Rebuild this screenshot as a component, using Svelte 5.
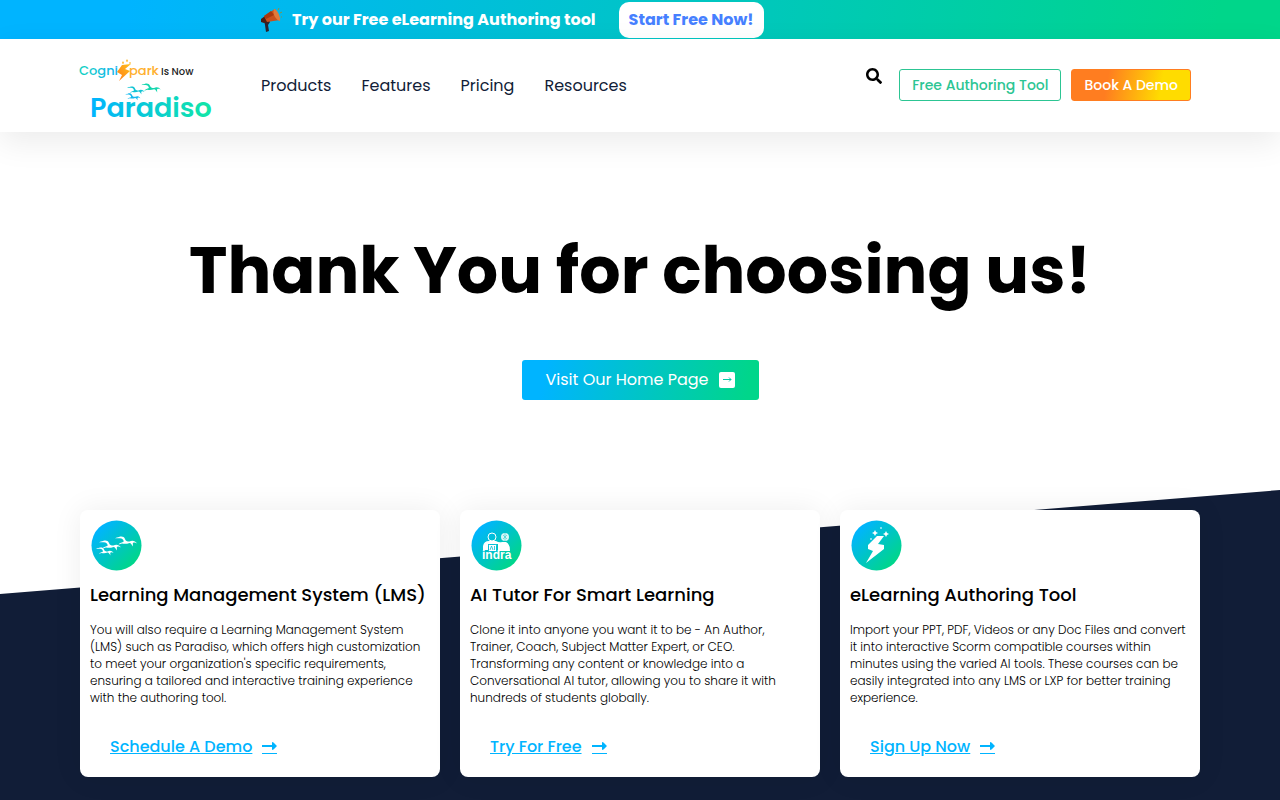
<script>
  const links = ["Products", "Features", "Pricing", "Resources"];

  const cards = [
    {
      icon: "birds",
      title: "Learning Management System (LMS)",
      text: "You will also require a Learning Management System\n(LMS) such as Paradiso, which offers high customization\nto meet your organization's specific requirements,\nensuring a tailored and interactive training experience\nwith the authoring tool.",
      action: "Schedule A Demo"
    },
    {
      icon: "indra",
      title: "AI Tutor For Smart Learning",
      text: "Clone it into anyone you want it to be - An Author,\nTrainer, Coach, Subject Matter Expert, or CEO.\nTransforming any content or knowledge into a\nConversational AI tutor, allowing you to share it with\nhundreds of students globally.",
      action: "Try For Free"
    },
    {
      icon: "spark",
      title: "eLearning Authoring Tool",
      text: "Import your PPT, PDF, Videos or any Doc Files and convert\nit into interactive Scorm compatible courses within\nminutes using the varied AI tools. These courses can be\neasily integrated into any LMS or LXP for better training\nexperience.",
      action: "Sign Up Now"
    }
  ];
</script>

<!-- one flying bird, about 22x10 -->
{#snippet bird(x, y, s)}
  <path
    transform="translate({x} {y}) scale({s})"
    d="M0 2.500C1.500 1 2.500 1.500 4 1C6.500 0 9 .5 10 3C10.500 5 12 5.500 14.500 5.500C17 4 20 4.300 22 7.500C20 6 18 6.200 17.800 7.500L18 10.500C16.800 9 16 7 14.500 7C12 8 9 8 7 7.500L3.500 8.500C5 6.800 7 6.600 8.800 5.600C8.500 3.500 7 2 4.500 2.200C3 2.500 1.500 2 0 2.500Z"
  />
{/snippet}

<div class="page">
  <div class="promo">
    <svg class="horn" width="24" height="24" viewBox="0 0 24 24" aria-hidden="true">
      <path d="M4 13L9 12L10 14L8 17L9 23L6 24L5 17Z" fill="#2b2430" />
      <path d="M1 11L5 8L8 14L4 15L1 14Z" fill="#4a1c12" />
      <path d="M4 8L15 1L20 12L7 14Z" fill="#c9501c" />
      <path d="M4 8L11 3L14 7L6 11Z" fill="#a8380f" />
      <path d="M14 1C17 1 21 9 20 13C16 12 12 6 14 1Z" fill="#e07a3c" />
      <path d="M18 2L19 0M20 5L22 4M21 9L22 9" stroke="#8b8f45" />
    </svg>
    <span class="promo-text">Try our Free eLearning Authoring tool</span>
    <a class="promo-link" href="#start">Start Free Now!</a>
  </div>

  <header>
    <a class="logo" href="#home" aria-label="Paradiso">
      <svg width="134" height="62" viewBox="0 0 134 62">
        <defs>
          <linearGradient id="word" gradientUnits="userSpaceOnUse" x1="12" y1="0" x2="132" y2="0">
            <stop offset="0" stop-color="#00b4ff" />
            <stop offset="1" stop-color="#12e6a6" />
          </linearGradient>
          <linearGradient id="cogni" gradientUnits="userSpaceOnUse" x1="0" y1="0" x2="38" y2="0">
            <stop offset="0" stop-color="#10d2c0" />
            <stop offset="1" stop-color="#12b4f0" />
          </linearGradient>
          <linearGradient id="flash" x1="0" y1="1" x2="1" y2="0">
            <stop offset="0" stop-color="#ff7a1a" />
            <stop offset="1" stop-color="#ffc21a" />
          </linearGradient>
        </defs>
        <text x="0" y="18" font-size="13" font-weight="500" fill="url(#cogni)">Cogni</text>
        <path d="M43 8L52 7L46 12L51 14L40 24L43 18L38 15Z" fill="url(#flash)" />
        <path d="M44 4L45 6L44 7L43 6ZM48 2L49 4L48 5L47 4ZM51 5L52 6L51 7L50 6Z" fill="#ffb21a" />
        <text x="50" y="18" font-size="13" font-weight="500" fill="#ffb02e">park</text>
        <text x="82" y="18" font-size="10" font-weight="500" fill="#222">Is Now</text>
        <text x="11" y="60" font-size="27" font-weight="600" fill="url(#word)">Paradiso</text>
        <g fill="#12b9ee">{@render bird(46, 36, 0.7)}</g>
        <g fill="#10c4d4">{@render bird(48, 29, 0.8)}</g>
        <g fill="#14d6ae">{@render bird(62, 26, 0.9)}</g>
      </svg>
    </a>
    <nav>
      {#each links as link}
        <a href="#{link.toLowerCase()}">{link}</a>
      {/each}
    </nav>
    <button class="search" aria-label="Search">
      <svg width="16" height="16" viewBox="0 0 512 512">
        <path d="M505 442.7L405.300 343c-4.500-4.500-10.600-7-17-7H372c27.600-35.300 44-79.700 44-128C416 93.100 322.900 0 208 0S0 93.100 0 208s93.100 208 208 208c48.300 0 92.700-16.400 128-44v16.300c0 6.400 2.500 12.500 7 17l99.700 99.700c9.400 9.400 24.600 9.400 33.900 0l28.300-28.300c9.400-9.400 9.400-24.600.1-34zM208 336c-70.700 0-128-57.200-128-128 0-70.700 57.200-128 128-128 70.700 0 128 57.200 128 128 0 70.700-57.200 128-128 128z" />
      </svg>
    </button>
    <div class="buttons">
      <a class="btn" href="#tool">Free Authoring Tool</a>
      <a class="btn demo" href="#demo">Book A Demo</a>
    </div>
  </header>

  <section class="hero">
    <h1>Thank You for choosing us!</h1>
    <a class="home" href="#home">
      <span>Visit Our Home Page</span>
      <svg width="16" height="16" viewBox="0 0 16 16" aria-hidden="true">
        <rect width="16" height="16" rx="2" fill="#fff" />
        <path d="M4 7.500H12M10 5.500L12 7.500L10 9.500" fill="none" stroke="#03cba9" />
      </svg>
    </a>
  </section>

  <section class="cards">
    {#each cards as card}
      <article>
        <svg class="badge" width="52" height="52" viewBox="0 0 52 52" aria-hidden="true">
          <defs>
            <linearGradient id="disc-{card.icon}" x1="0.15" y1="0.15" x2="0.85" y2="0.85">
              <stop offset="0" stop-color="#00b4ff" />
              <stop offset="1" stop-color="#00d68a" />
            </linearGradient>
          </defs>
          <circle cx="26.500" cy="25.500" r="25" fill="url(#disc-{card.icon})" />
          {#if card.icon === "birds"}
            <g fill="#fff">
              {@render bird(9, 20, 1)}
              {@render bird(25, 16, 1)}
              {@render bird(6, 27, 0.8)}
            </g>
          {:else if card.icon === "indra"}
            <circle cx="22" cy="17" r="4" fill="none" stroke="#fff" />
            <circle cx="35" cy="17" r="4" fill="#fff" fill-opacity="0.85" />
            <path d="M33 15L37 19M37 15L33 19M35 13V21" stroke="#10c4c4" stroke-width="0.5" />
            <path d="M13 30V26Q14 21 19 21H26Q29 23 32 22H36Q40 24 40 31H28V24H18V30Z" fill="#fff" />
            <rect x="18.500" y="24.500" width="8" height="7" rx="1" fill="#fff" stroke="#06bfd8" />
            <path d="M20 30L21.500 26L23 30M24.500 26V30" fill="none" stroke="#06bfd8" stroke-width="0.8" />
            <text class="indra" x="12" y="39" font-size="12" font-weight="700" fill="#fff">indra</text>
          {:else}
            <path d="M27 16H34L28 24L34 25V29L16 43L23 31L18 29V25Z" fill="#fff" />
            <path d="M25 10L26 12L28 13L26 14L25 16L24 14L22 13L24 12ZM36 11L37 13L39 14L37 15L36 17L35 15L33 14L35 13ZM31 7L32 8L31 9L30 8ZM21 18L22 19L21 20L20 19Z" fill="#fff" />
          {/if}
        </svg>
        <h2>{card.title}</h2>
        <p>{card.text}</p>
        <a class="action" href="#{card.icon}">
          <span>{card.action}</span>
          <svg width="15" height="14" viewBox="0 0 15 14" aria-hidden="true">
            <path d="M0 6H10V4Q10 2 12 4L15 7L12 10Q10 12 10 10V8H0Z" />
          </svg>
        </a>
      </article>
    {/each}
  </section>
</div>

<style>
  :global(body) {
    margin: 0;
    background: #fff;
  }

  .page {
    display: flex;
    flex-direction: column;
    min-height: 100vh;
    font-family: Poppins, Inter, sans-serif;
    color: #000;
  }

  a {
    color: inherit;
    text-decoration: none;
    white-space: nowrap;
  }

  .promo {
    display: flex;
    align-items: center;
    height: 39px;
    padding-left: 260px;
    font-size: 16px;
    font-weight: 700;
    color: #fff;
    background: linear-gradient(100deg, #00b4ff 10%, #00d68a 95%);
  }

  .promo-text {
    margin: 0 23px 0 8px;
    white-space: nowrap;
  }

  .promo-link {
    padding: 0 10px;
    line-height: 36px;
    color: #4680ff;
    background: #fff;
    border-radius: 10px;
  }

  header {
    position: relative;
    display: flex;
    align-items: center;
    height: 93px;
    padding: 0 89px 0 79px;
    box-sizing: border-box;
    background: #fff;
    box-shadow: 0 10px 30px rgba(0, 0, 0, 0.08);
  }

  .logo {
    display: flex;
    margin-top: 4px;
  }

  .logo svg {
    overflow: visible;
  }

  .indra {
    font-family: "Liberation Sans", sans-serif;
  }

  nav {
    display: flex;
    gap: 30px;
    margin-left: 48px;
    font-size: 16px;
    color: #111d37;
  }

  .search {
    display: flex;
    align-self: flex-start;
    margin: 29px 17px 0 auto;
    padding: 0;
    border: 0;
    background: none;
    cursor: pointer;
  }

  .buttons {
    display: flex;
    align-self: flex-start;
    gap: 10px;
    padding-top: 30px;
  }

  .btn {
    padding: 0 12px;
    border: 1px solid #2cc593;
    border-radius: 3px;
    font-size: 14px;
    font-weight: 500;
    line-height: 30px;
    color: #2cc593;
  }

  .demo {
    color: #fff;
    border-color: #ff7d20;
    background: linear-gradient(100deg, #ff7d20 30%, #ffdc00 75%);
  }

  .hero {
    display: flex;
    flex-direction: column;
    align-items: center;
    padding: 99px 20px 90px;
  }

  h1 {
    margin: 0 0 49px;
    font-size: 65px;
    font-weight: 700;
    line-height: 80px;
    text-align: center;
  }

  .home {
    display: flex;
    align-items: center;
    gap: 10px;
    padding: 0 24px;
    border-radius: 3px;
    font-size: 16px;
    line-height: 40px;
    color: #fff;
    background: linear-gradient(100deg, #00b4ff 10%, #00d68a 95%);
  }

  .cards {
    position: relative;
    display: grid;
    flex: 1;
    grid-template-columns: repeat(3, 1fr);
    align-items: start;
    gap: 20px;
    padding: 20px 80px 23px;
  }

  /* slanted dark backdrop */
  .cards::before {
    content: "";
    position: absolute;
    inset: 0;
    background: #111d37;
    clip-path: polygon(0 104px, 100% 0, 100% 100%, 0 100%);
  }

  article {
    position: relative;
    padding: 10px 10px 18px;
    border-radius: 8px;
    background: #fff;
    box-shadow: 0 0 30px rgba(0, 0, 0, 0.07);
  }

  .badge {
    display: block;
  }

  h2 {
    margin: 12px 0 15px;
    font-size: 18px;
    font-weight: 500;
    line-height: 22px;
    white-space: nowrap;
  }

  p {
    margin: 0;
    font-size: 12px;
    font-weight: 300;
    line-height: 17px;
    white-space: pre-line;
  }

  .action {
    display: inline-flex;
    align-items: flex-start;
    gap: 10px;
    margin: 30px 20px 0;
    font-size: 16px;
    font-weight: 500;
    line-height: 21px;
    color: #00b4ff;
  }

  .action span {
    text-decoration: underline;
  }

  .action svg {
    margin-top: 3px;
    border-bottom: 1px solid;
    fill: currentColor;
  }
</style>
